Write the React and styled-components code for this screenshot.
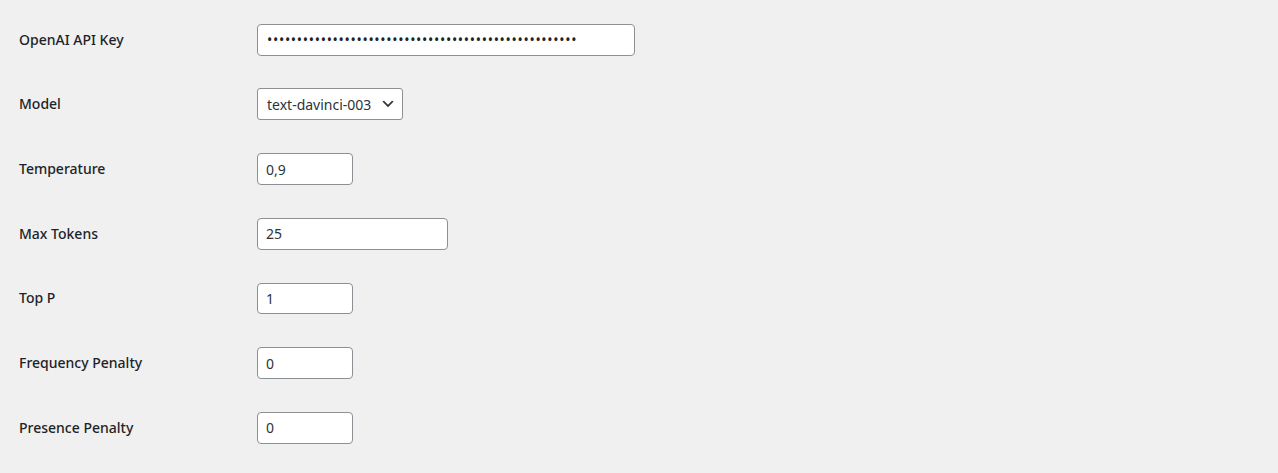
import styled, { createGlobalStyle } from "styled-components";

const GlobalStyle = createGlobalStyle`
  html, body {
    margin: 0;
    padding: 0;
    background: #f0f0f1;
  }
  body {
    font-family: "Noto Sans", "Open Sans", sans-serif;
    color: #1d2327;
  }
`;

const FormTable = styled.div`
  display: grid;
  grid-template-columns: 238px 1fr;
  padding: 7.5px 0 0 19px;
`;

const Row = styled.div`
  display: contents;
`;

const Label = styled.label`
  display: flex;
  align-items: center;
  height: 64.67px;
  font-size: 14px;
  font-weight: 500;
  line-height: 1.3;
  color: #1d2327;
`;

const Cell = styled.div`
  display: flex;
  align-items: center;
  height: 64.67px;
`;

const TextInput = styled.input`
  box-sizing: border-box;
  width: ${(p) => p.$w}px;
  height: 31.5px;
  padding: 0 8px;
  margin: 0;
  border: 1px solid #8c8f94;
  border-radius: 4px;
  background: #fff;
  color: #2c3338;
  font-family: "Noto Sans", "Open Sans", sans-serif;
  font-size: 14px;
  line-height: 2;
  outline: none;

  &[type="password"] {
    padding-left: 9px;
    letter-spacing: 0.7px;
    color: #1d2327;
  }
`;

const SelectWrap = styled.div`
  position: relative;
  display: inline-flex;
`;

const Select = styled.select`
  box-sizing: border-box;
  appearance: none;
  width: 146px;
  height: 32px;
  padding: 0 24px 0 9px;
  margin: 0;
  border: 1px solid #8c8f94;
  border-radius: 3px;
  background: #fff;
  color: #2c3338;
  font-family: "Noto Sans", "Open Sans", sans-serif;
  font-size: 14px;
  outline: none;
`;

const Chevron = styled.svg`
  position: absolute;
  right: 7px;
  top: 8px;
  width: 16px;
  height: 16px;
  pointer-events: none;
`;

const fields = [
  { label: "Top P", value: "1", w: 96 },
  { label: "Frequency Penalty", value: "0", w: 96 },
  { label: "Presence Penalty", value: "0", w: 96 },
];

export default function App() {
  return (
    <>
      <GlobalStyle />
      <FormTable>
        <Row>
          <Label>OpenAI API Key</Label>
          <Cell>
            <TextInput
              type="password"
              $w={378}
              defaultValue={"sk-" + "x".repeat(49)}
            />
          </Cell>
        </Row>
        <Row>
          <Label>Model</Label>
          <Cell>
            <SelectWrap>
              <Select defaultValue="text-davinci-003">
                <option>text-davinci-003</option>
                <option>text-curie-001</option>
                <option>text-babbage-001</option>
                <option>text-ada-001</option>
              </Select>
              <Chevron viewBox="0 0 20 20">
                <path d="M5 6l5 5 5-5 2 1-7 7-7-7 2-1z" fill="#2c3338" />
              </Chevron>
            </SelectWrap>
          </Cell>
        </Row>
        <Row>
          <Label>Temperature</Label>
          <Cell>
            <TextInput type="text" $w={96} defaultValue="0,9" />
          </Cell>
        </Row>
        <Row>
          <Label>Max Tokens</Label>
          <Cell>
            <TextInput type="text" $w={191} defaultValue="25" />
          </Cell>
        </Row>
        {fields.map((f) => (
          <Row key={f.label}>
            <Label>{f.label}</Label>
            <Cell>
              <TextInput type="text" $w={f.w} defaultValue={f.value} />
            </Cell>
          </Row>
        ))}
      </FormTable>
    </>
  );
}
